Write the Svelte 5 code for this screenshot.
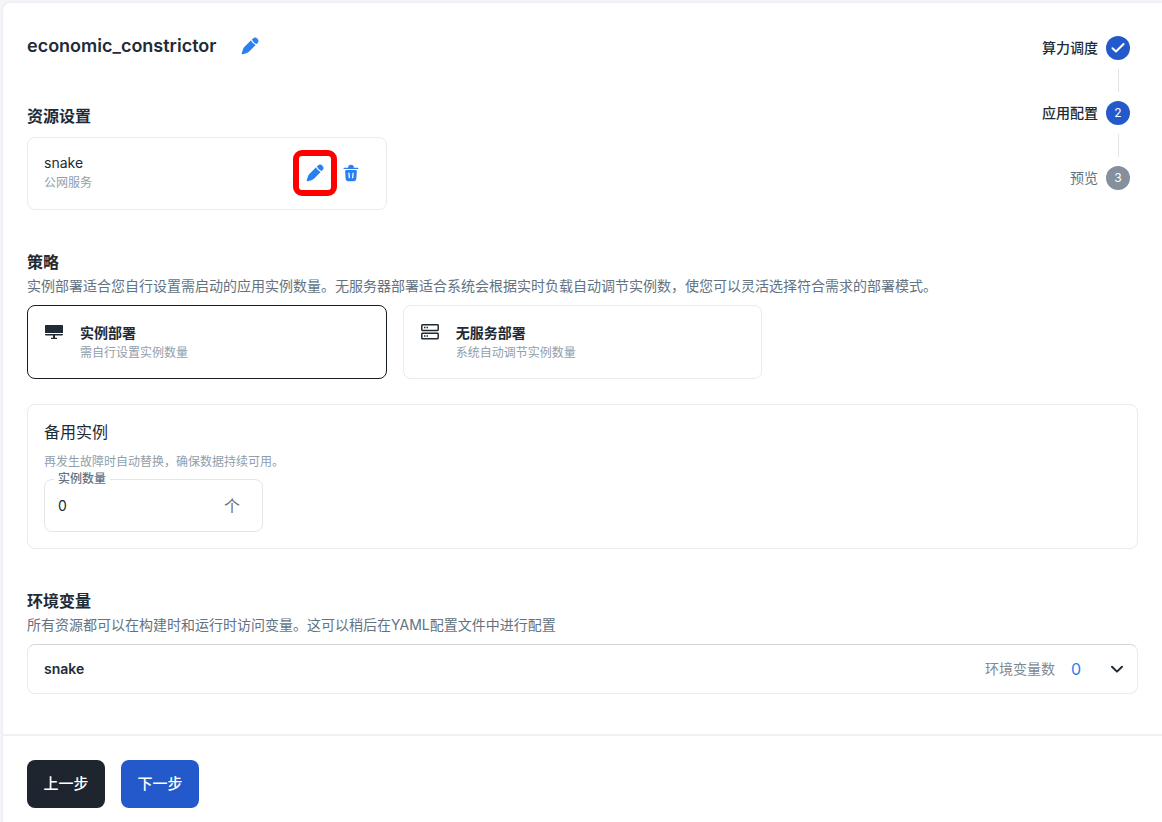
<script>
  let appName = 'economic_constrictor';
  let deployMode = 'instance';
  let spareCount = 0;
  let envOpen = false;

  const steps = [
    { label: '算力调度', state: 'done' },
    { label: '应用配置', state: 'active' },
    { label: '预览', state: 'pending' }
  ];

  const modes = [
    { id: 'instance', title: '实例部署', hint: '需自行设置实例数量' },
    { id: 'serverless', title: '无服务部署', hint: '系统自动调节实例数量' }
  ];
</script>

{#snippet pen()}
  <svg class="icon" viewBox="0 0 24 24" fill="currentColor" aria-hidden="true">
    <path d="m11.4 18.161l7.396-7.396a10.289 10.289 0 0 1-3.326-2.234a10.29 10.29 0 0 1-2.235-3.327L5.839 12.6c-.577.577-.866.866-1.114 1.184a6.556 6.556 0 0 0-.749 1.211c-.173.364-.302.752-.56 1.526l-1.362 4.083a1.06 1.06 0 0 0 1.342 1.342l4.083-1.362c.775-.258 1.162-.387 1.526-.56c.43-.205.836-.456 1.211-.749c.318-.248.607-.537 1.184-1.114m9.448-9.448a3.932 3.932 0 0 0-5.561-5.561l-.887.887l.038.111a8.754 8.754 0 0 0 2.092 3.32a8.754 8.754 0 0 0 3.431 2.13z" />
  </svg>
{/snippet}

<div class="page">
  <main class="panel">
    <div class="content">
      <div class="top">
        <div class="title-row">
          <h1>{appName}</h1>
          <button class="icon-button" type="button" aria-label="编辑名称">{@render pen()}</button>
        </div>

        <section class="resources">
          <h2>资源设置</h2>
          <div class="card-grid">
            <div class="card resource">
              <div class="resource-text">
                <span class="resource-name">snake</span>
                <span class="hint">公网服务</span>
              </div>
              <button class="icon-button marked" type="button" aria-label="编辑">{@render pen()}</button>
              <button class="icon-button" type="button" aria-label="删除">
                <svg class="icon" viewBox="0 0 24 24" fill="currentColor" aria-hidden="true">
                  <path d="M3 6.524c0-.395.327-.714.73-.714h4.788c.006-.842.098-1.995.932-2.793A3.68 3.68 0 0 1 12 2a3.68 3.68 0 0 1 2.55 1.017c.834.798.926 1.951.932 2.793h4.788c.403 0 .73.32.73.714a.722.722 0 0 1-.73.714H3.73A.722.722 0 0 1 3 6.524" />
                  <path fill-rule="evenodd" d="M11.596 22h.808c2.783 0 4.174 0 5.08-.886c.904-.886.996-2.339 1.181-5.245l.267-4.188c.1-1.577.15-2.366-.303-2.865c-.454-.5-1.22-.5-2.753-.5H8.124c-1.533 0-2.3 0-2.753.5c-.454.5-.404 1.288-.303 2.865l.267 4.188c.185 2.906.277 4.36 1.182 5.245c.905.886 2.296.886 5.079.886m-1.35-9.811c-.04-.434-.408-.75-.82-.707c-.413.043-.713.43-.672.864l.5 5.263c.04.434.408.75.82.707c.413-.043.713-.43.672-.864zm4.329-.707c.412.043.713.43.671.864l-.5 5.263c-.04.434-.409.75-.82.707c-.413-.043-.713-.43-.672-.864l.5-5.263c.04-.434.409-.75.82-.707" />
                </svg>
              </button>
            </div>
          </div>
        </section>

        <ol class="stepper">
          {#each steps as step, i}
            <li class="step {step.state}">
              <span class="step-label">{step.label}</span>
              <span class="step-dot">
                {#if step.state === 'done'}
                  <svg viewBox="0 0 24 24" width="24" height="24" fill="none" stroke="currentColor" stroke-width="2" stroke-linecap="round" stroke-linejoin="round" aria-hidden="true">
                    <path d="M6.500 12.200l3.500 3.300L17.600 8" />
                  </svg>
                {:else}
                  {i + 1}
                {/if}
              </span>
            </li>
          {/each}
        </ol>
      </div>

      <section class="strategy">
        <h2>策略</h2>
        <p class="desc">实例部署适合您自行设置需启动的应用实例数量。无服务器部署适合系统会根据实时负载自动调节实例数，使您可以灵活选择符合需求的部署模式。</p>
        <div class="card-grid">
          {#each modes as mode}
            <label class="card mode" class:selected={deployMode === mode.id}>
              <input type="radio" name="deploy-mode" value={mode.id} bind:group={deployMode} />
              {#if mode.id === 'instance'}
                <svg class="icon" viewBox="0 0 20 20" fill="currentColor" aria-hidden="true">
                  <path d="M1.600 3h16.800q.6 0 .6.6V11H1V3.600q0-.6.6-.6zM1 12h18v.6q0 .8-.8.8H11v2.400h2V17H7v-1.200h2v-2.400H1.800q-.8 0-.8-.8z" />
                </svg>
              {:else}
                <svg class="icon" viewBox="0 0 20 20" fill="none" stroke="currentColor" stroke-width="1.500" aria-hidden="true">
                  <rect x="1.800" y="2.800" width="16.400" height="5.600" rx=".7" />
                  <rect x="1.800" y="11.200" width="16.400" height="5.600" rx=".7" />
                  <path d="M4 5.600h1.500M6.500 5.600H8M4 14h1.500M6.500 14H8" />
                </svg>
              {/if}
              <span class="mode-text">
                <span class="mode-title">{mode.title}</span>
                <span class="hint">{mode.hint}</span>
              </span>
            </label>
          {/each}
        </div>
      </section>

      <section class="card spare">
        <h3>备用实例</h3>
        <p class="hint">再发生故障时自动替换，确保数据持续可用。</p>
        <div class="field">
          <label for="spare-count">实例数量</label>
          <input id="spare-count" type="text" inputmode="numeric" bind:value={spareCount} />
          <span class="unit">个</span>
        </div>
      </section>

      <section class="env">
        <h2>环境变量</h2>
        <p class="desc">所有资源都可以在构建时和运行时访问变量。这可以稍后在YAML配置文件中进行配置</p>
        <button class="card accordion" type="button" aria-expanded={envOpen} on:click={() => (envOpen = !envOpen)}>
          <span class="env-name">snake</span>
          <span class="env-label">环境变量数</span>
          <span class="env-count">0</span>
          <svg class="icon" class:open={envOpen} viewBox="0 0 20 20" fill="none" stroke="currentColor" stroke-width="2" stroke-linecap="round" stroke-linejoin="round" aria-hidden="true">
            <path d="M5 7.800l5 4.800l5-4.800" />
          </svg>
        </button>
      </section>
    </div>

    <footer>
      <button class="nav-button dark" type="button">上一步</button>
      <button class="nav-button primary" type="button">下一步</button>
    </footer>
  </main>
</div>

<style>
  :global(body) {
    margin: 0;
    background: #f5f6fa;
  }

  .page {
    box-sizing: border-box;
    min-height: 100vh;
    padding: 3px 0 0 3px;
    display: flex;
    color: #212b36;
    font-family: Inter, "Noto Sans CJK SC", sans-serif;
    font-size: 14px;
    line-height: 20px;
  }

  .page *,
  .page *::before {
    box-sizing: border-box;
  }

  .panel {
    flex: 1;
    min-width: 0;
    background: #fff;
    border-top-left-radius: 8px;
    box-shadow: 0 0 4px rgba(145, 158, 171, 0.2);
  }

  .content {
    padding: 29px 24px 40px;
  }

  h1,
  h2,
  h3,
  p,
  ol {
    margin: 0;
    padding: 0;
  }

  h1 {
    font-size: 18px;
    line-height: 28px;
    font-weight: 600;
  }

  h2 {
    font-size: 16px;
    line-height: 24px;
    font-weight: 600;
  }

  h3 {
    font-size: 16px;
    line-height: 24px;
    font-weight: 400;
  }

  button,
  input {
    font: inherit;
    color: inherit;
  }

  button {
    cursor: pointer;
  }

  .icon {
    display: block;
    flex: none;
    width: 20px;
    height: 20px;
  }

  .icon-button {
    flex: none;
    padding: 0;
    border: 0;
    background: none;
    color: #2a80f0;
  }

  .card {
    border: 1px solid #e9ebee;
    border-radius: 8px;
    background: #fff;
  }

  .card-grid {
    display: grid;
    grid-template-columns: repeat(3, 1fr);
    gap: 16px;
  }

  .desc {
    line-height: 24px;
    color: #637381;
  }

  .hint {
    font-size: 12px;
    line-height: 20px;
    color: #919eab;
  }

  /* title, resources and stepper */
  .top {
    position: relative;
  }

  .title-row {
    display: flex;
    align-items: center;
    gap: 24px;
  }

  .resources {
    margin-top: 44px;
  }

  .resources .card-grid {
    margin-top: 9px;
  }

  .resource {
    display: flex;
    align-items: center;
    padding: 12px 25px 13px 16px;
  }

  .resource-text {
    flex: 1;
    display: flex;
    flex-direction: column;
  }

  .marked {
    display: grid;
    place-items: center;
    width: 44px;
    height: 46px;
    margin-right: 4px;
    border: 6px solid #fe0000;
    border-radius: 9px;
  }

  /* sits over the free right side of the top block */
  .stepper {
    position: absolute;
    top: 4px;
    right: 8px;
    display: flex;
    flex-direction: column;
    gap: 41px;
    list-style: none;
  }

  .step {
    position: relative;
    display: flex;
    justify-content: flex-end;
    align-items: center;
    gap: 8px;
    font-weight: 500;
  }

  .step + .step::before {
    content: '';
    position: absolute;
    right: 11px;
    bottom: 33px;
    height: 23px;
    border-left: 1px solid #e0e3e7;
  }

  .step-dot {
    display: grid;
    place-items: center;
    width: 24px;
    height: 24px;
    border-radius: 50%;
    background: #2359ca;
    color: #fff;
    font-size: 12px;
    font-weight: 400;
  }

  .pending {
    color: #637381;
    font-weight: 400;
  }

  .pending .step-dot {
    background: #84909e;
  }

  /* strategy */
  .strategy {
    margin-top: 40px;
  }

  .strategy .card-grid {
    margin-top: 7px;
  }

  .mode {
    position: relative;
    display: flex;
    gap: 16px;
    padding: 16px 16px 15px;
    cursor: pointer;
  }

  .mode.selected {
    border-color: #161c24;
  }

  .mode input {
    position: absolute;
    opacity: 0;
    margin: 0;
  }

  .mode-text {
    display: flex;
    flex-direction: column;
    padding-top: 1px;
  }

  .mode-title {
    font-weight: 600;
  }

  /* spare instances */
  .spare {
    margin-top: 25px;
    padding: 15px 16px 16px;
  }

  .spare .hint {
    margin-top: 8px;
  }

  .field {
    position: relative;
    display: flex;
    align-items: center;
    width: 219px;
    height: 53px;
    margin-top: 7px;
    padding: 0 22px 0 13px;
    border: 1px solid #e3e6e9;
    border-radius: 8px;
  }

  .field label {
    position: absolute;
    top: -11px;
    left: 9px;
    padding: 0 4px;
    background: #fff;
    color: #637381;
    font-size: 12px;
    line-height: 20px;
    font-weight: 500;
  }

  .field input {
    flex: 1;
    min-width: 0;
    padding: 0;
    border: 0;
    outline: 0;
    background: none;
  }

  .unit {
    color: #637381;
    font-size: 16px;
  }

  /* environment variables */
  .env {
    margin-top: 40px;
  }

  .accordion {
    display: flex;
    align-items: center;
    width: 100%;
    height: 50px;
    margin-top: 7px;
    padding: 0 10px 0 16px;
    border-top-color: #d3d6d9;
    text-align: left;
  }

  .env-name {
    flex: 1;
    font-weight: 600;
  }

  .env-label {
    color: #7d8995;
  }

  .env-count {
    margin: 0 26px 0 16px;
    color: #2a80f0;
    font-size: 16px;
  }

  .open {
    transform: rotate(180deg);
  }

  footer {
    display: flex;
    gap: 16px;
    padding: 24px;
    border-top: 2px solid #f0f1f3;
  }

  .nav-button {
    min-width: 78px;
    height: 48px;
    padding: 0 16px;
    border: 0;
    border-radius: 8px;
    color: #fff;
    font-size: 15px;
    font-weight: 500;
  }

  .dark {
    background: #1e252e;
  }

  .primary {
    background: #2359ca;
  }
</style>
